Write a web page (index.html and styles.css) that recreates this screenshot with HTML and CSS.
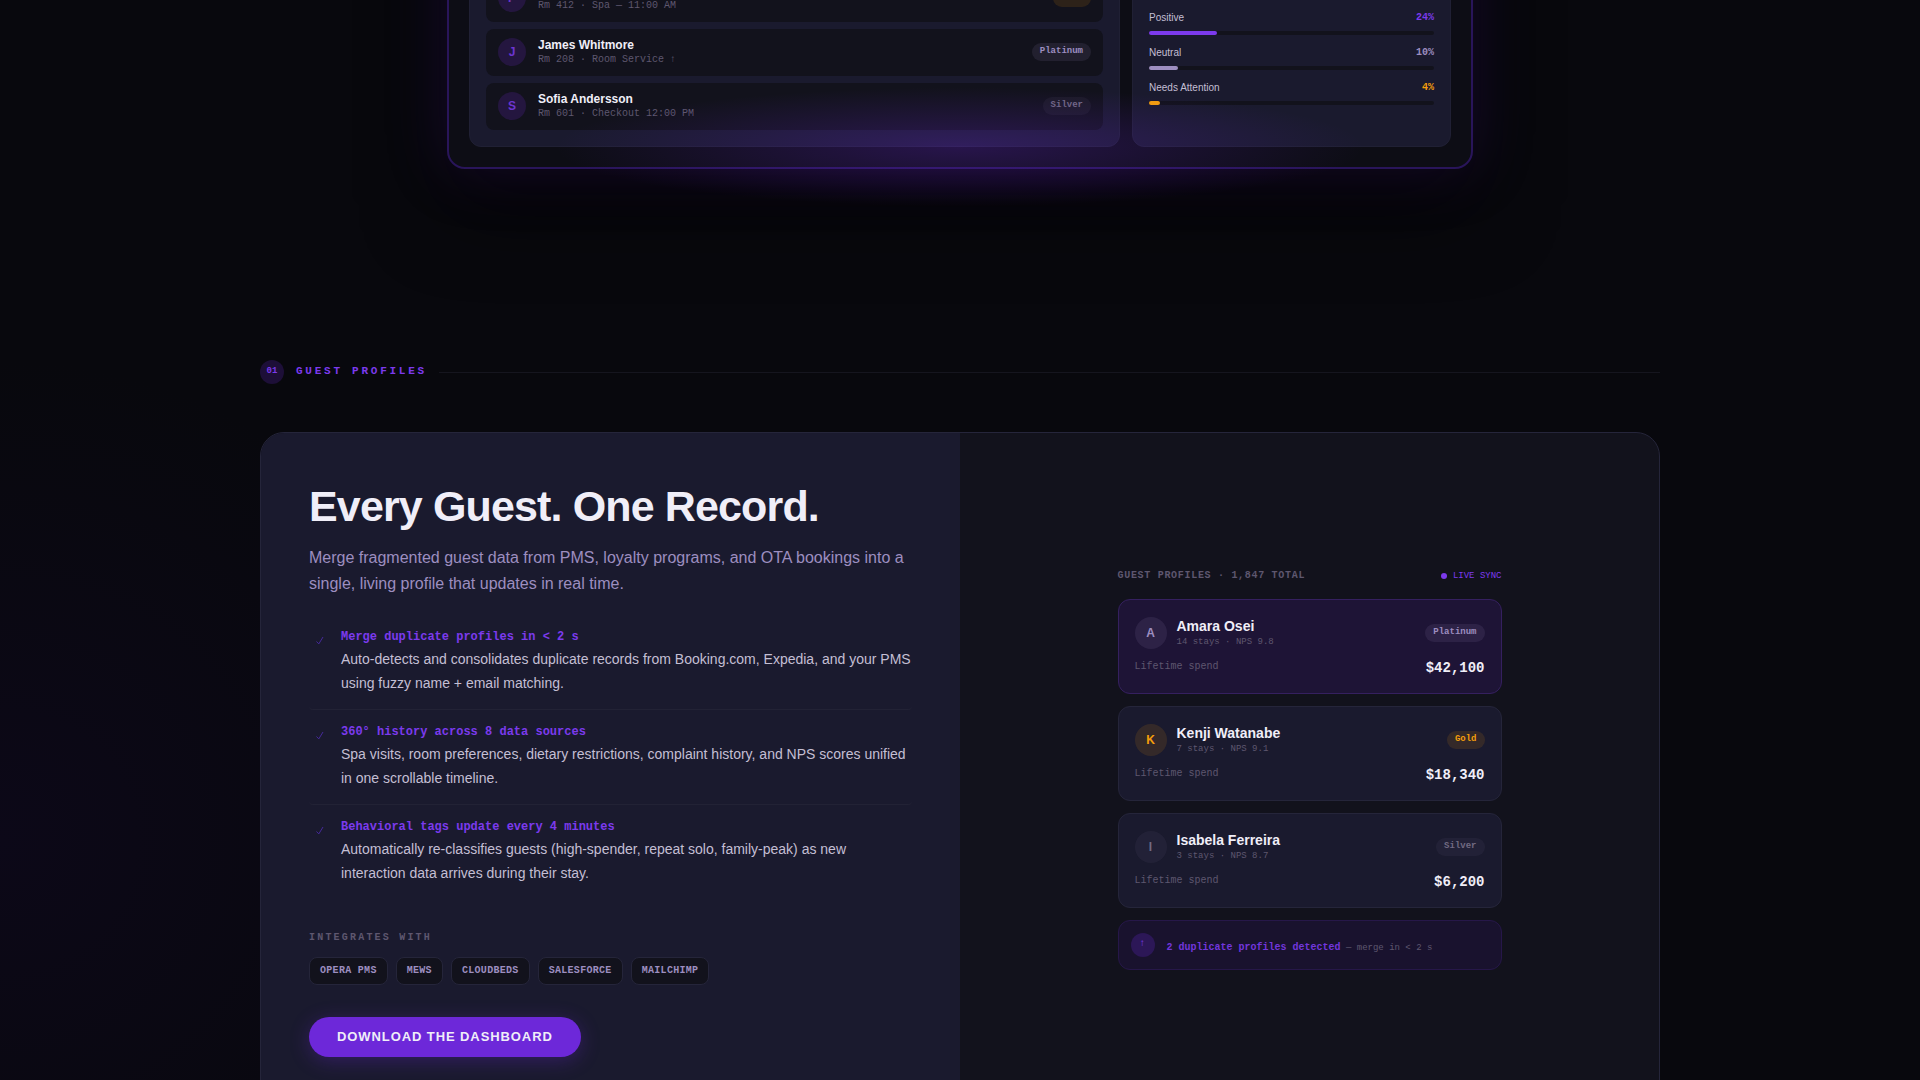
FILE: index.html
```html
<!DOCTYPE html>
<html lang="en">
<head>
    <meta charset="UTF-8">
    <meta name="viewport" content="width=device-width, initial-scale=1.0">
    <title>Guest Profiles</title>
    <link rel="stylesheet" href="styles.css">
</head>
<body>
    <!-- Dashboard preview -->
    <section class="hero">
        <div class="dashboard">
            <div class="panel guests">
                <div class="guest-row">
                    <span class="avatar">P</span>
                    <div class="guest-info">
                        <strong>Priya Nair</strong>
                        <small>Rm 412 · Spa — 11:00 AM</small>
                    </div>
                    <span class="pill gold">Gold</span>
                </div>
                <div class="guest-row">
                    <span class="avatar">J</span>
                    <div class="guest-info">
                        <strong>James Whitmore</strong>
                        <small>Rm 208 · Room Service ↑</small>
                    </div>
                    <span class="pill platinum">Platinum</span>
                </div>
                <div class="guest-row">
                    <span class="avatar">S</span>
                    <div class="guest-info">
                        <strong>Sofia Andersson</strong>
                        <small>Rm 601 · Checkout 12:00 PM</small>
                    </div>
                    <span class="pill silver">Silver</span>
                </div>
            </div>
            <div class="panel sentiment">
                <div class="meter positive">
                    <div class="meter-label"><span>Positive</span><b>24%</b></div>
                    <div class="track"><div class="fill" style="width: 24%"></div></div>
                </div>
                <div class="meter neutral">
                    <div class="meter-label"><span>Neutral</span><b>10%</b></div>
                    <div class="track"><div class="fill" style="width: 10%"></div></div>
                </div>
                <div class="meter attention">
                    <div class="meter-label"><span>Needs Attention</span><b>4%</b></div>
                    <div class="track"><div class="fill" style="width: 4%"></div></div>
                </div>
            </div>
        </div>
    </section>

    <!-- 01 Guest profiles -->
    <section class="container">
        <div class="section-label">
            <span class="number">01</span>
            <span class="label-text">GUEST PROFILES</span>
            <span class="line"></span>
        </div>

        <div class="feature-card">
            <div class="feature-copy">
                <h2>Every Guest. One Record.</h2>
                <p class="lead">Merge fragmented guest data from PMS, loyalty programs, and OTA bookings into a single, living profile that updates in real time.</p>

                <ul class="feature-list">
                    <li>
                        <svg class="check" viewBox="0 0 22 22" aria-hidden="true"><path d="M7.5 12.5l2.3 2.4L14 8"/></svg>
                        <div>
                            <h3>Merge duplicate profiles in &lt; 2 s</h3>
                            <p>Auto-detects and consolidates duplicate records from Booking.com, Expedia, and your PMS using fuzzy name + email matching.</p>
                        </div>
                    </li>
                    <li>
                        <svg class="check" viewBox="0 0 22 22" aria-hidden="true"><path d="M7.5 12.5l2.3 2.4L14 8"/></svg>
                        <div>
                            <h3>360° history across 8 data sources</h3>
                            <p>Spa visits, room preferences, dietary restrictions, complaint history, and NPS scores unified in one scrollable timeline.</p>
                        </div>
                    </li>
                    <li>
                        <svg class="check" viewBox="0 0 22 22" aria-hidden="true"><path d="M7.5 12.5l2.3 2.4L14 8"/></svg>
                        <div>
                            <h3>Behavioral tags update every 4 minutes</h3>
                            <p>Automatically re-classifies guests (high-spender, repeat solo, family-peak) as new interaction data arrives during their stay.</p>
                        </div>
                    </li>
                </ul>

                <p class="integrates">INTEGRATES WITH</p>
                <div class="chips">
                    <span class="chip">OPERA PMS</span>
                    <span class="chip">MEWS</span>
                    <span class="chip">CLOUDBEDS</span>
                    <span class="chip">SALESFORCE</span>
                    <span class="chip">MAILCHIMP</span>
                </div>
                <button type="button" class="download">DOWNLOAD THE DASHBOARD</button>
            </div>

            <div class="feature-demo">
                <div class="profiles">
                    <div class="profiles-head">
                        <span class="total">GUEST PROFILES · 1,847 TOTAL</span>
                        <span class="live">LIVE SYNC</span>
                    </div>
                    <article class="profile active">
                        <div class="profile-top">
                            <span class="avatar platinum">A</span>
                            <div class="profile-info">
                                <strong>Amara Osei</strong>
                                <small>14 stays · NPS 9.8</small>
                            </div>
                            <span class="pill platinum">Platinum</span>
                        </div>
                        <div class="spend"><span>Lifetime spend</span><b>$42,100</b></div>
                    </article>
                    <article class="profile">
                        <div class="profile-top">
                            <span class="avatar gold">K</span>
                            <div class="profile-info">
                                <strong>Kenji Watanabe</strong>
                                <small>7 stays · NPS 9.1</small>
                            </div>
                            <span class="pill gold">Gold</span>
                        </div>
                        <div class="spend"><span>Lifetime spend</span><b>$18,340</b></div>
                    </article>
                    <article class="profile">
                        <div class="profile-top">
                            <span class="avatar silver">I</span>
                            <div class="profile-info">
                                <strong>Isabela Ferreira</strong>
                                <small>3 stays · NPS 8.7</small>
                            </div>
                            <span class="pill silver">Silver</span>
                        </div>
                        <div class="spend"><span>Lifetime spend</span><b>$6,200</b></div>
                    </article>
                    <div class="duplicates">
                        <span class="alert-icon">↑</span>
                        <p><b>2 duplicate profiles detected</b> — merge in &lt; 2 s</p>
                    </div>
                </div>
            </div>
        </div>
    </section>
</body>
</html>
```

FILE: styles.css
```css
* {
    box-sizing: border-box;
    margin: 0;
    padding: 0;
}

:root {
    --bg: #08080d;
    --surface: #12121c;
    --card: #1a1a2e;
    --border: #25253a;
    --text: #f0eef8;
    --body: #c4bfd4;
    --lavender: #9d8ec0;
    --muted: #5e576f;
    --violet: #7c3aed;
    --amber: #f59e0b;
    --mono: "Liberation Mono", monospace;
}

body {
    min-height: 100vh;
    overflow-x: hidden;
    font-family: "Liberation Sans", Arial, sans-serif;
    color: var(--text);
    background: radial-gradient(ellipse 500px 480px at 0 840px, #0c0818, transparent), var(--bg);
}

/* Dashboard preview */
.hero {
    margin-top: -231px;
    padding: 0 24px 191px;
}

.dashboard {
    position: relative;
    display: grid;
    grid-template-columns: 651px 1fr;
    gap: 12px;
    max-width: 1026px;
    min-height: 400px;
    margin: 0 auto;
    padding: 20px;
    background: #0d0d15;
    border: 2px solid #29155a;
    border-radius: 18px;
    box-shadow: 0 0 60px rgba(76, 29, 149, 0.25), 0 40px 80px rgba(0, 0, 0, 0.6);
}

.dashboard::after {
    content: "";
    position: absolute;
    left: 10%;
    right: 10%;
    bottom: -40px;
    height: 120px;
    background: radial-gradient(ellipse, rgba(109, 40, 217, 0.28), transparent 70%);
    pointer-events: none;
}

.panel {
    display: flex;
    flex-direction: column;
    justify-content: flex-end;
    padding: 16px;
    background: var(--card);
    border: 1px solid #202034;
    border-radius: 12px;
}

.guests {
    gap: 7px;
}

.guest-row {
    display: flex;
    align-items: center;
    gap: 12px;
    height: 47px;
    padding: 0 12px 1px;
    background: var(--surface);
    border-radius: 8px;
}

.guest-info,
.profile-info {
    display: flex;
    flex-direction: column;
    flex: 1;
}

.guest-info {
    padding-bottom: 2px;
}

.guest-info strong {
    font-size: 12px;
    line-height: 16px;
}

.guest-info small {
    font: 10px/13px var(--mono);
    color: var(--muted);
}

.avatar {
    display: flex;
    align-items: center;
    justify-content: center;
    width: 28px;
    height: 28px;
    border-radius: 50%;
    font-size: 12px;
    font-weight: bold;
    color: #6d35d0;
    background: #24163f;
}

.pill {
    padding: 3px 8px 5px;
    border-radius: 10px;
    font: bold 9px/10px var(--mono);
}

.platinum {
    color: var(--lavender);
    background: rgba(157, 142, 192, 0.12);
}

.gold {
    color: var(--amber);
    background: rgba(245, 158, 11, 0.12);
}

.silver {
    color: #716a82;
    background: rgba(140, 130, 160, 0.08);
}

.sentiment {
    gap: 10px;
    padding-bottom: 41px;
}

.meter {
    display: flex;
    flex-direction: column;
    gap: 5px;
}

.meter-label {
    display: flex;
    justify-content: space-between;
    font-size: 10px;
    line-height: 16px;
    color: var(--body);
}

.meter-label b {
    font-family: var(--mono);
    color: var(--tone);
}

.track {
    height: 4px;
    border-radius: 2px;
    background: var(--surface);
}

.fill {
    height: 4px;
    border-radius: 2px;
    background: var(--tone);
}

.positive {
    --tone: #7c3aed;
}

.neutral {
    --tone: #9d8ec0;
}

.attention {
    --tone: #f59e0b;
}

/* Section */
.container {
    max-width: 1448px;
    margin: 0 auto;
    padding: 0 24px;
}

.section-label {
    display: flex;
    align-items: center;
    gap: 12px;
    margin-bottom: 48px;
    font-family: var(--mono);
    font-weight: bold;
    color: var(--violet);
}

.number {
    width: 24px;
    height: 24px;
    border-radius: 50%;
    font-size: 9px;
    line-height: 22px;
    text-align: center;
    background: #1d0f38;
}

.label-text {
    padding-bottom: 2px;
    font-size: 11px;
    letter-spacing: 0.25em;
}

.line {
    flex: 1;
    height: 1px;
    background: #15151e;
}

.feature-card {
    display: grid;
    grid-template-columns: 1fr 1fr;
    overflow: hidden;
    background: var(--surface);
    border: 1px solid var(--border);
    border-radius: 24px;
}

.feature-copy {
    padding: 48px;
    background: var(--card);
}

h2 {
    margin-bottom: 14px;
    font-size: 43px;
    line-height: 50px;
    letter-spacing: -0.02em;
}

.lead {
    margin-bottom: 18px;
    font-size: 16px;
    line-height: 26px;
    color: var(--lavender);
}

.feature-list {
    list-style: none;
    margin-bottom: 31px;
}

.feature-list li {
    display: flex;
    gap: 10px;
    padding: 14px 0;
    border-bottom: 1px solid #222235;
    border-radius: 4px;
}

.feature-list li:last-child {
    border-bottom: none;
}

.check {
    flex: none;
    width: 22px;
    height: 22px;
    fill: none;
    stroke: #45299a;
}

.feature-list h3 {
    padding-bottom: 2px;
    font: bold 12px/16px var(--mono);
    color: var(--violet);
}

.feature-list p {
    font-size: 14px;
    line-height: 24px;
    color: var(--body);
}

.integrates {
    margin-bottom: 11px;
    font: bold 10px/16px var(--mono);
    letter-spacing: 0.22em;
    color: var(--muted);
}

.chips {
    display: flex;
    flex-wrap: wrap;
    gap: 8px;
    margin-bottom: 32px;
}

.chip {
    padding: 7px 10px;
    font: bold 10px/12px var(--mono);
    letter-spacing: 0.03em;
    color: var(--lavender);
    background: var(--surface);
    border: 1px solid var(--border);
    border-radius: 8px;
}

.download {
    height: 40px;
    padding: 0 28px 2px;
    border: none;
    border-radius: 20px;
    font: bold 13px "Liberation Sans", Arial, sans-serif;
    letter-spacing: 0.07em;
    color: var(--text);
    background: #6d28d9;
    box-shadow: 0 4px 20px rgba(109, 40, 217, 0.3);
    cursor: pointer;
}

/* Guest profile cards */
.feature-demo {
    display: flex;
    align-items: center;
    justify-content: center;
    padding: 48px;
}

.profiles {
    display: flex;
    flex-direction: column;
    gap: 12px;
    width: 100%;
    max-width: 384px;
}

.profiles-head {
    display: flex;
    justify-content: space-between;
    align-items: center;
    padding-bottom: 3px;
    font: 9px/16px var(--mono);
}

.total {
    font-size: 10px;
    font-weight: bold;
    letter-spacing: 0.07em;
    color: var(--muted);
}

.live {
    display: flex;
    align-items: center;
    gap: 6px;
    color: var(--violet);
}

.live::before {
    content: "";
    width: 6px;
    height: 6px;
    border-radius: 50%;
    background: var(--violet);
}

.profile {
    padding: 16px 16px 15px;
    background: var(--card);
    border: 1px solid var(--border);
    border-radius: 12px;
}

.profile.active {
    background: #1e1436;
    border-color: #35205f;
}

.profile-top {
    display: flex;
    align-items: center;
    gap: 10px;
    margin-bottom: 10px;
}

.profile .avatar {
    width: 32px;
    height: 32px;
}

.profile-info strong {
    font-size: 14px;
    line-height: 20px;
}

.profile-info small {
    font: 9px/13px var(--mono);
    color: var(--muted);
}

.spend {
    display: flex;
    justify-content: space-between;
    font: 10px/16px var(--mono);
    color: var(--muted);
}

.spend b {
    font-size: 14px;
    line-height: 19px;
    color: var(--text);
}

.duplicates {
    display: flex;
    align-items: center;
    gap: 12px;
    padding: 12px;
    background: #19122e;
    border: 1px solid #261749;
    border-radius: 12px;
}

.duplicates p {
    padding-top: 5px;
    font: 9px/16px var(--mono);
    color: var(--muted);
}

.duplicates b {
    font-size: 10px;
    color: #7236dc;
}

.alert-icon {
    width: 24px;
    height: 24px;
    border-radius: 50%;
    font: bold 10px/22px var(--mono);
    text-align: center;
    color: var(--violet);
    background: #2c1757;
}
```
